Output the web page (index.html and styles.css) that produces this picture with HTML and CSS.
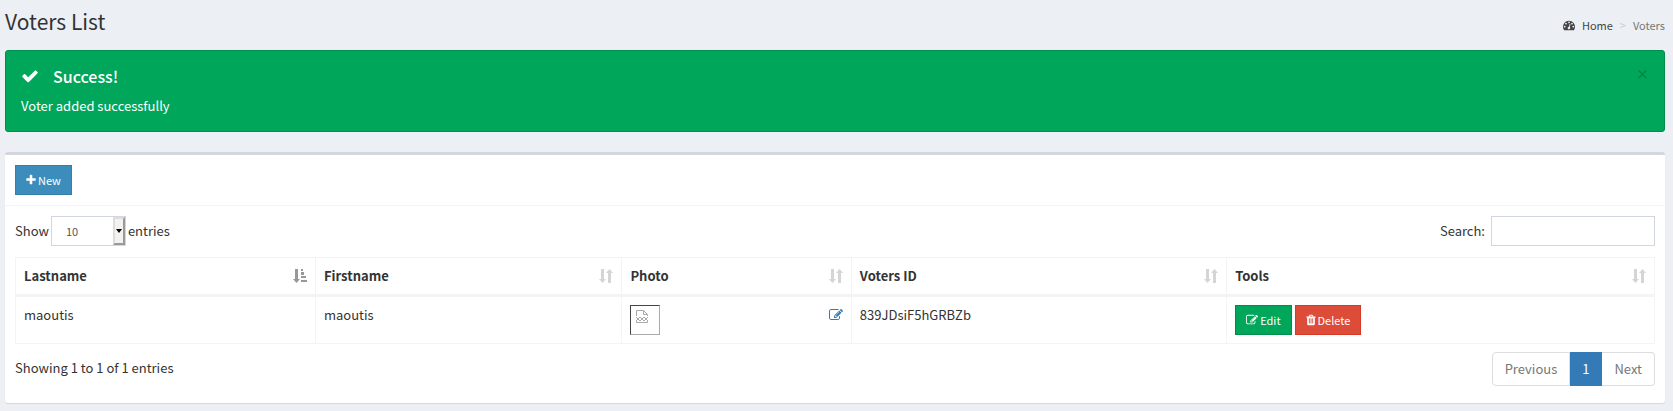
FILE: index.html
```html
<!DOCTYPE html>
<html lang="en">
<head>
<meta charset="utf-8">
<title>Voters List</title>
<link rel="stylesheet" href="styles.css">
</head>
<body>
<svg class="sprite" aria-hidden="true">
  <symbol id="check" viewBox="0 0 1792 1792"><path d="M1671 566q0 40-28 68l-724 724-136 136q-28 28-68 28t-68-28l-136-136-362-362q-28-28-28-68t28-68l136-136q28-28 68-28t68 28l294 295 656-657q28-28 68-28t68 28l136 136q28 28 28 68z"/></symbol>
  <symbol id="plus" viewBox="192 0 1408 1792"><path d="M1600 736v192q0 40-28 68t-68 28h-416v416q0 40-28 68t-68 28h-192q-40 0-68-28t-28-68v-416h-416q-40 0-68-28t-28-68v-192q0-40 28-68t68-28h416v-416q0-40 28-68t68-28h192q40 0 68 28t28 68v416h416q40 0 68 28t28 68z"/></symbol>
  <symbol id="pencil" viewBox="0 0 1792 1792"><path d="M888 1184l116-116-152-152-116 116v56h96v96h56zm440-720q-16-16-33 1l-350 350q-17 17-1 33t33-1l350-350q17-17 1-33zm80 594v190q0 119-84.5 203.5t-203.5 84.5h-832q-119 0-203.5-84.5t-84.5-203.5v-832q0-119 84.5-203.5t203.5-84.5h832q63 0 117 25 15 7 18 23 3 17-9 29l-49 49q-14 14-32 8-23-6-45-6h-832q-66 0-113 47t-47 113v832q0 66 47 113t113 47h832q66 0 113-47t47-113v-126q0-13 9-22l64-64q15-15 35-7t20 29zm-96-738l288 288-672 672h-288v-288zm444 132l-92 92-288-288 92-92q28-28 68-28t68 28l152 152q28 28 28 68t-28 68z"/></symbol>
  <symbol id="trash" viewBox="192 0 1408 1792"><path d="M704 1376v-704q0-14-9-23t-23-9h-64q-14 0-23 9t-9 23v704q0 14 9 23t23 9h64q14 0 23-9t9-23zm256 0v-704q0-14-9-23t-23-9h-64q-14 0-23 9t-9 23v704q0 14 9 23t23 9h64q14 0 23-9t9-23zm256 0v-704q0-14-9-23t-23-9h-64q-14 0-23 9t-9 23v704q0 14 9 23t23 9h64q14 0 23-9t9-23zm-544-992h448l-48-117q-7-9-17-11h-317q-10 2-17 11zm928 32v64q0 14-9 23t-23 9h-96v948q0 83-47 143.5t-113 60.5h-832q-66 0-113-58.5t-47-141.5v-952h-96q-14 0-23-9t-9-23v-64q0-14 9-23t23-9h309l70-167q15-37 54-63t79-26h320q40 0 79 26t54 63l70 167h309q14 0 23 9t9 23z"/></symbol>
  <symbol id="gauge" viewBox="0 0 1792 1792"><path d="M384 1152q0-53-37.5-90.5t-90.5-37.5-90.5 37.5-37.5 90.5 37.5 90.5 90.5 37.5 90.5-37.5 37.5-90.5zm192-448q0-53-37.5-90.5t-90.5-37.5-90.5 37.5-37.5 90.5 37.5 90.5 90.5 37.5 90.5-37.5 37.5-90.5zm428 481l101-382q6-26-7.5-48.5t-38.5-29.5-48 6.5-30 39.5l-101 382q-60 5-107 43.5t-63 98.5q-20 77 20 146t117 89 146-20 89-117q16-60-6-117t-72-91zm660-33q0-53-37.5-90.5t-90.5-37.5-90.5 37.5-37.5 90.5 37.5 90.5 90.5 37.5 90.5-37.5 37.5-90.5zm-640-640q0-53-37.5-90.5t-90.5-37.5-90.5 37.5-37.5 90.5 37.5 90.5 90.5 37.5 90.5-37.5 37.5-90.5zm448 192q0-53-37.5-90.5t-90.5-37.5-90.5 37.5-37.5 90.5 37.5 90.5 90.5 37.5 90.5-37.5 37.5-90.5zm320 448q0 261-141 483-19 29-54 29h-1402q-35 0-54-29-141-221-141-483 0-182 71-348t191-286 286-191 348-71 348 71 286 191 191 286 71 348z"/></symbol>
  <symbol id="sort" viewBox="0 0 14 16"><path d="M2 1h3v10h2L3.5 15 0 11h2zM9 15V5H7l3.500-4L14 5h-2v10z"/></symbol>
  <symbol id="sort-asc" viewBox="0 0 14 16"><path d="M2 1h3v10h2L3.5 15 0 11h2zM8 1h2v2H8zM8 4h3v3H8zM8 8h5v2H8zM8 12h6v2H8z"/></symbol>
  <symbol id="broken" viewBox="0 0 14 16"><path fill="none" stroke="#aaa" d="M1.500 7V1.500h7l4 4V7M8.500 1.500v4h4M1 8l2 2 2-2 2 2 2-2 2 2 2-2M1 12l2-2 2 2 2-2 2 2 2-2 2 2M1.500 11v2.500h11V11"/></symbol>
</svg>
<header class="page-head">
  <h1 class="title">Voters List</h1>
  <nav class="crumbs" aria-label="Breadcrumb">
    <a class="home" href="#"><svg class="icon-small"><use href="#gauge"/></svg>Home</a>
    <span class="divider">&gt;</span>
    <span class="current">Voters</span>
  </nav>
</header>
<main class="content">
  <section class="alert" role="alert">
    <div class="alert-body">
      <h2 class="alert-title"><svg class="icon-large"><use href="#check"/></svg>Success!</h2>
      <p class="alert-text">Voter added successfully</p>
    </div>
    <button class="close" type="button" aria-label="Close">×</button>
  </section>
  <section class="box">
    <div class="box-head">
      <button class="btn blue" type="button"><svg class="icon-narrow"><use href="#plus"/></svg>New</button>
    </div>
    <div class="box-body">
      <div class="controls">
        <div class="length">
          <label for="length">Show</label>
          <span class="select-wrap">
            <select id="length" class="select"><option>10</option><option>25</option><option>50</option><option>100</option></select>
            <span class="arrow"></span>
          </span>
          <span>entries</span>
        </div>
        <div class="search">
          <label for="search">Search:</label>
          <input id="search" class="input" type="search">
        </div>
      </div>
      <table class="table">
        <colgroup><col class="col-last"><col class="col-first"><col class="col-photo"><col class="col-id"><col></colgroup>
        <thead>
          <tr>
            <th><div class="cell">Lastname<svg class="sort active"><use href="#sort-asc"/></svg></div></th>
            <th><div class="cell">Firstname<svg class="sort"><use href="#sort"/></svg></div></th>
            <th><div class="cell">Photo<svg class="sort"><use href="#sort"/></svg></div></th>
            <th><div class="cell">Voters ID<svg class="sort"><use href="#sort"/></svg></div></th>
            <th><div class="cell">Tools<svg class="sort"><use href="#sort"/></svg></div></th>
          </tr>
        </thead>
        <tbody>
          <tr>
            <td>maoutis</td>
            <td>maoutis</td>
            <td><div class="cell">
              <span class="photo"><svg class="photo-icon"><use href="#broken"/></svg></span>
              <a class="edit-photo" href="#" aria-label="Edit photo"><svg class="icon"><use href="#pencil"/></svg></a>
            </div></td>
            <td>839JDsiF5hGRBZb</td>
            <td><div class="tools">
              <button class="btn green" type="button"><svg class="icon-small"><use href="#pencil"/></svg>Edit</button>
              <button class="btn red" type="button"><svg class="icon-narrow"><use href="#trash"/></svg>Delete</button>
            </div></td>
          </tr>
        </tbody>
      </table>
      <div class="table-foot">
        <div class="info">Showing 1 to 1 of 1 entries</div>
        <nav class="pages" aria-label="Pagination">
          <a class="page" href="#">Previous</a>
          <a class="page on" href="#">1</a>
          <a class="page" href="#">Next</a>
        </nav>
      </div>
    </div>
  </section>
</main>
</body>
</html>
```
FILE: styles.css
```css
* { box-sizing: border-box; }
body {
  margin: 0;
  padding: 0 8px 8px 5px;
  background: #ecf0f5;
  color: #333;
  font: 13px/20px "Noto Sans CJK SC", "Open Sans", sans-serif;
}
h1, h2, p { margin: 0; }
a { text-decoration: none; }
button, input, select { font-family: inherit; }
svg { fill: currentColor; flex: none; }
.sprite { position: absolute; width: 0; height: 0; }
.icon { width: 14px; height: 14px; }
.icon-small { width: 12px; height: 12px; }
.icon-narrow { width: 10px; height: 12px; }
.icon-large { width: 18px; height: 18px; }

.page-head {
  display: flex;
  justify-content: space-between;
  align-items: center;
  padding: 8px 0;
}
.title { font-size: 21px; font-weight: 400; line-height: 26px; padding-bottom: 8px; }
.crumbs { display: flex; align-items: center; gap: 7px; font-size: 11px; }
.home { display: flex; align-items: center; gap: 7px; color: #444; }
.divider { color: #ccc; }
.current { color: #777; }

.alert {
  display: flex;
  justify-content: space-between;
  margin-bottom: 20px;
  padding: 15px;
  border: 1px solid #008d4c;
  border-radius: 3px;
  background: #00a65a;
  color: #fff;
}
.alert-title {
  display: flex;
  align-items: center;
  gap: 14px;
  margin-bottom: 10px;
  font-size: 16px;
  font-weight: 500;
  line-height: 20px;
}
.close {
  align-self: flex-start;
  padding: 0;
  border: 0;
  background: none;
  color: #000;
  font-size: 13px;
  font-weight: 700;
  line-height: 16px;
  opacity: .2;
}

.box {
  border-top: 3px solid #d2d6de;
  border-radius: 3px;
  background: #fff;
  box-shadow: 0 1px 1px rgba(0, 0, 0, .1);
}
.box-head { padding: 10px; border-bottom: 1px solid #f4f4f4; }
.box-body { padding: 10px 10px 17px; }
.btn {
  display: flex;
  align-items: center;
  gap: 2px;
  height: 30px;
  padding: 0 10px 1px;
  border: 1px solid;
  color: #fff;
  font-size: 11px;
  line-height: 18px;
}
.blue { background: #3c8dbc; border-color: #367fa9; }
.green { background: #00a65a; border-color: #008d4c; }
.red { background: #dd4b39; border-color: #d73925; }

.controls, .table-foot { display: flex; justify-content: space-between; }
.controls { margin-bottom: 11px; }
.length, .search { display: flex; align-items: center; line-height: 18px; }
.length { gap: 2px; }
.search { gap: 6px; }
.select-wrap { position: relative; }
.select, .input {
  display: block;
  height: 30px;
  border: 1px solid #d2d6de;
  border-radius: 0;
  background: #fff;
  color: #555;
  font-size: 11px;
}
.select { width: 75px; padding: 0 14px; appearance: none; }
.input { width: 164px; padding: 0 10px; }
.arrow {
  position: absolute;
  top: 1px;
  right: 1px;
  display: grid;
  place-items: center;
  width: 12px;
  height: 28px;
  border: 2px solid;
  border-color: #ddd #999 #999 #ddd;
  background: #f4f2f0;
  pointer-events: none;
}
.arrow::before {
  content: "";
  border: 3px solid transparent;
  border-top: 4px solid #000;
  border-bottom: 0;
}

.table {
  width: 100%;
  table-layout: fixed;
  border-collapse: collapse;
  border: 1px solid #f4f4f4;
}
.col-last { width: 18.3%; }
.col-first { width: 18.7%; }
.col-photo { width: 14%; }
.col-id { width: 22.9%; }
.table th, .table td {
  padding: 8px;
  border: 1px solid #f4f4f4;
  text-align: left;
  vertical-align: top;
}
.table th { border-bottom-width: 3px; font-weight: 700; }
.cell { display: flex; justify-content: space-between; }
.table th .cell { align-items: center; min-height: 20px; }
.sort { width: 14px; height: 16px; opacity: .2; }
.sort.active { opacity: .5; }
.photo {
  width: 30px;
  height: 30px;
  padding: 3px 4px;
  border: 1px solid;
  border-color: #444 #aaa #aaa #444;
}
.photo-icon { display: block; width: 14px; height: 16px; }
.edit-photo { color: #337ab7; padding-top: 3px; line-height: 14px; }
.tools { display: flex; gap: 3px; }

.table-foot { padding-top: 8px; }
.info { padding-top: 6px; }
.pages { display: flex; }
.page {
  padding: 6px 12px;
  border: 1px solid #ddd;
  border-left-width: 0;
  color: #777;
}
.page:first-child { border-left-width: 1px; border-radius: 4px 0 0 4px; }
.page:last-child { border-radius: 0 4px 4px 0; }
.page.on { border-color: #337ab7; background: #337ab7; color: #fff; }
```
